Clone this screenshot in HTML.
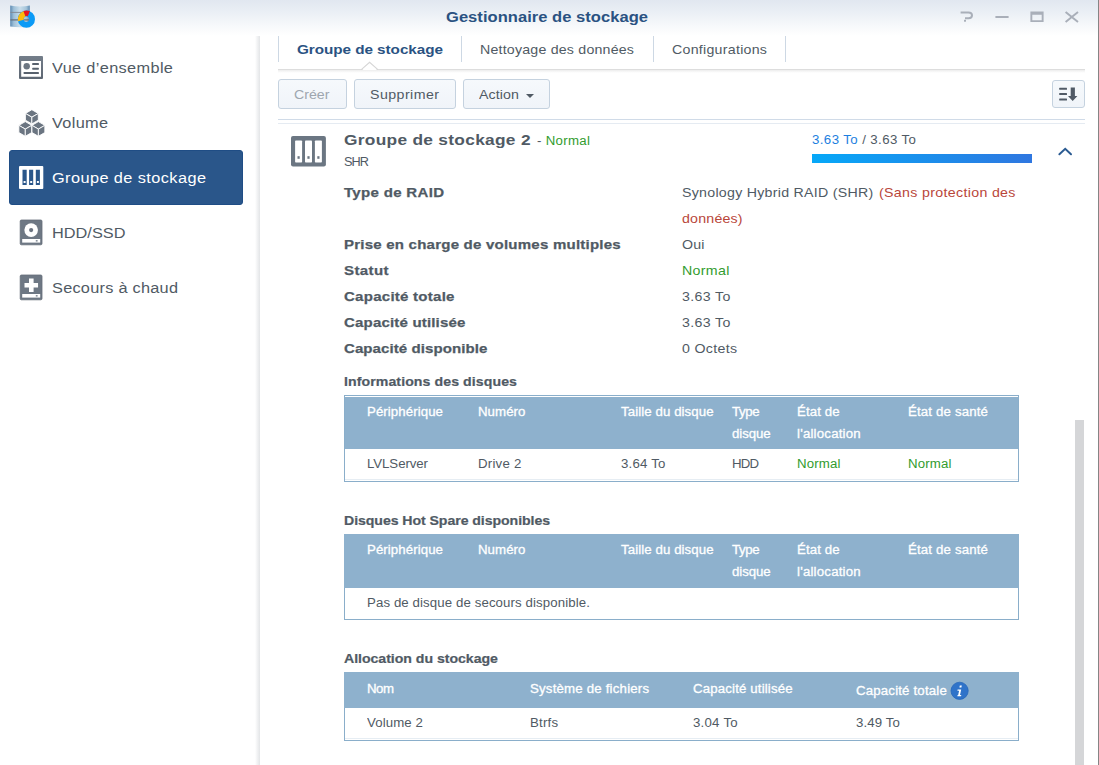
<!DOCTYPE html>
<html lang="fr">
<head>
<meta charset="utf-8">
<title>Gestionnaire de stockage</title>
<style>
*{box-sizing:border-box;margin:0;padding:0}
html,body{width:1099px;height:765px;overflow:hidden;background:#fff}
body{font-family:"Liberation Sans",sans-serif;color:#505a64;position:relative;font-size:13px}
.abs{position:absolute}
.t{position:absolute;white-space:nowrap;line-height:20px;height:20px;margin-top:1px}
#titlebar{left:0;top:0;width:1098px;height:36px;background:linear-gradient(#e1e7f0 0px,#eaeff5 12px,#f7f9fb 26px,#ffffff 36px)}
#rightedge{left:1098px;top:0;width:1px;height:765px;background:#858585}
#title{font-weight:bold;font-size:14.5px;color:#2a5282}
#sideshadow{left:255px;top:36px;width:5px;height:729px;background:linear-gradient(90deg,rgba(255,255,255,0),#f3f4f5 40%,#e3e5e7 100%)}
.nav{font-size:15.4px;color:#505a64}
#sel{left:9px;top:150px;width:234px;height:55px;background:#2a568a;border:1px solid #1f4d85;border-radius:3px}
.tab{font-size:13.4px;color:#505a64}
.tabsep{position:absolute;top:36px;width:1px;height:26px;background:#cdd8e4}
.btn{position:absolute;top:79px;height:30px;border:1px solid #c5d2df;border-radius:3px;background:linear-gradient(#f6f9fc,#f0f4f9)}
.btxt{font-size:13.4px;color:#505a64}
.lbl{-webkit-text-stroke:0.25px #505a64;font-weight:bold;font-size:13.2px;color:#505a64}
.val{font-size:13.4px;color:#505a64}
.sec{-webkit-text-stroke:0.2px #505a64;font-weight:bold;font-size:12.4px;color:#505a64}
.tbl{position:absolute;left:344px;width:675px;border:1px solid #8fb1cc;background:#fff}
.th{position:absolute;left:344px;width:675px;background:#8eb1cd}
.h{font-size:12.5px;color:#fff;-webkit-text-stroke:0.3px #fff}
.c{font-size:12.5px;color:#505a64}
.green{color:#329c2e}
.red{color:#b9463a}
</style>
</head>
<body>
<!-- title bar -->
<div id="titlebar" class="abs"></div>
<div id="rightedge" class="abs"></div>
<div id="title" class="t" style="letter-spacing:0.03px;transform:scaleX(1.14);transform-origin:0 0;left:446px;top:6px">Gestionnaire de stockage</div>

<!-- sidebar -->
<div id="sideshadow" class="abs"></div>
<div id="sel" class="abs"></div>
<div id="n1" class="t nav" style="letter-spacing:0.33px;transform:scaleX(1.06);transform-origin:0 0;left:52px;top:57px">Vue d’ensemble</div>
<div id="n2" class="t nav" style="letter-spacing:0.30px;transform:scaleX(1.06);transform-origin:0 0;left:52px;top:112px">Volume</div>
<div id="n3" class="t nav" style="letter-spacing:0.39px;transform:scaleX(1.06);transform-origin:0 0;left:52px;top:167px;color:#fff">Groupe de stockage</div>
<div id="n4" class="t nav" style="letter-spacing:-0.00px;transform:scaleX(1.06);transform-origin:0 0;left:52px;top:222px">HDD/SSD</div>
<div id="n5" class="t nav" style="letter-spacing:0.24px;transform:scaleX(1.06);transform-origin:0 0;left:52px;top:277px">Secours à chaud</div>

<!-- tabs -->
<div class="tabsep" style="left:278px"></div>
<div class="tabsep" style="left:461px"></div>
<div class="tabsep" style="left:653px"></div>
<div class="tabsep" style="left:785px"></div>
<div id="tb1" class="t tab" style="letter-spacing:-0.04px;transform:scaleX(1.14);transform-origin:0 0;left:297px;top:39px;font-weight:bold;color:#2a5282">Groupe de stockage</div>
<div id="tb2" class="t tab" style="letter-spacing:0.19px;transform:scaleX(1.06);transform-origin:0 0;left:480px;top:39px">Nettoyage des données</div>
<div id="tb3" class="t tab" style="letter-spacing:0.25px;transform:scaleX(1.06);transform-origin:0 0;left:672px;top:39px">Configurations</div>
<div id="tabline" class="abs" style="left:278px;top:69px;width:807px;height:4px;background:linear-gradient(#dddddd 0px,#dddddd 1px,#ededed 1px,#f3f3f3 2px,#fafafa 3px,#ffffff 4px)"></div>

<!-- toolbar -->
<div class="btn" style="left:278px;width:69px"></div>
<div class="btn" style="left:354px;width:102px"></div>
<div class="btn" style="left:463px;width:87px"></div>
<div class="btn" style="left:1052px;width:33px;top:80px;height:28px"></div>
<div id="b1" class="t btxt" style="letter-spacing:-0.02px;transform:scaleX(1.06);transform-origin:0 0;left:294px;top:84px;color:#9ea6af">Créer</div>
<div id="b2" class="t btxt" style="letter-spacing:0.41px;transform:scaleX(1.06);transform-origin:0 0;left:370px;top:84px">Supprimer</div>
<div id="b3" class="t btxt" style="letter-spacing:0.07px;transform:scaleX(1.06);transform-origin:0 0;left:479px;top:84px">Action</div>
<div class="abs" style="left:526px;top:94px;width:0;height:0;border-left:4px solid transparent;border-right:4px solid transparent;border-top:4px solid #505a64"></div>
<div class="abs" style="left:278px;top:119px;width:807px;height:1px;background:#d0dbe8"></div>
<div class="abs" style="left:278px;top:123px;width:807px;height:1px;background:#e5ebf2"></div>

<!-- group header -->
<div id="g1" class="t" style="letter-spacing:0.26px;transform:scaleX(1.14);transform-origin:0 0;left:344px;top:129px;font-weight:bold;font-size:15.2px;color:#505a64">Groupe de stockage 2</div>
<div id="g2" class="t" style="letter-spacing:0.29px;transform:scaleX(1.06);transform-origin:0 0;left:537px;top:130px;font-size:12.5px;color:#505a64">- <span class="green">Normal</span></div>
<div id="g3" class="t" style="letter-spacing:-0.88px;transform:scaleX(1.06);transform-origin:0 0;left:344px;top:151px;font-size:12px">SHR</div>
<div id="u1" class="t" style="letter-spacing:0.38px;transform:scaleX(1.06);transform-origin:0 0;left:812px;top:129px;font-size:12.5px"><span style="color:#1d7fe0">3.63 To</span> / 3.63 To</div>
<div class="abs" style="left:812px;top:154px;width:220px;height:9px;background:linear-gradient(90deg,#06a8f8,#2f77e0)"></div>

<!-- details -->
<div id="l1" class="t lbl" style="letter-spacing:0.27px;transform:scaleX(1.14);transform-origin:0 0;left:344px;top:182px">Type de RAID</div>
<div id="l2" class="t lbl" style="letter-spacing:0.19px;transform:scaleX(1.14);transform-origin:0 0;left:344px;top:234px">Prise en charge de volumes multiples</div>
<div id="l3" class="t lbl" style="letter-spacing:0.35px;transform:scaleX(1.14);transform-origin:0 0;left:344px;top:260px">Statut</div>
<div id="l4" class="t lbl" style="letter-spacing:0.22px;transform:scaleX(1.14);transform-origin:0 0;left:344px;top:286px">Capacité totale</div>
<div id="l5" class="t lbl" style="letter-spacing:0.15px;transform:scaleX(1.14);transform-origin:0 0;left:344px;top:312px">Capacité utilisée</div>
<div id="l6" class="t lbl" style="letter-spacing:0.06px;transform:scaleX(1.14);transform-origin:0 0;left:344px;top:338px">Capacité disponible</div>
<div id="v1" class="t val" style="letter-spacing:0.25px;transform:scaleX(1.06);transform-origin:0 0;left:682px;top:182px">Synology Hybrid RAID (SHR)</div>
<div id="v1b" class="t val red" style="letter-spacing:0.31px;transform:scaleX(1.06);transform-origin:0 0;left:879px;top:182px">(Sans protection des</div>
<div id="v1c" class="t val red" style="letter-spacing:0.19px;transform:scaleX(1.06);transform-origin:0 0;left:682px;top:208px">données)</div>
<div id="v2" class="t val" style="letter-spacing:0.10px;transform:scaleX(1.06);transform-origin:0 0;left:682px;top:234px">Oui</div>
<div id="v3" class="t val green" style="letter-spacing:0.29px;transform:scaleX(1.06);transform-origin:0 0;left:682px;top:260px">Normal</div>
<div id="v4" class="t val" style="letter-spacing:0.34px;transform:scaleX(1.06);transform-origin:0 0;left:682px;top:286px">3.63 To</div>
<div id="v5" class="t val" style="letter-spacing:0.34px;transform:scaleX(1.06);transform-origin:0 0;left:682px;top:312px">3.63 To</div>
<div id="v6" class="t val" style="letter-spacing:0.30px;transform:scaleX(1.06);transform-origin:0 0;left:682px;top:338px">0 Octets</div>


<!-- table 1 -->
<div id="s1" class="t sec" style="letter-spacing:0.07px;transform:scaleX(1.14);transform-origin:0 0;left:344px;top:371px">Informations des disques</div>
<div class="abs" style="left:344px;top:395px;width:675px;height:87px;border:1px solid #8aaeca;background:#fff"></div>
<div class="abs" style="left:345px;top:397px;width:673px;height:52px;background:#8eb1cd"></div>
<div class="abs" style="left:345px;top:479px;width:673px;height:1px;background:#e6edf3"></div>
<div id="h11" class="t h" style="letter-spacing:0.07px;transform:scaleX(1.06);transform-origin:0 0;left:367px;top:401px">Périphérique</div>
<div id="h12" class="t h" style="letter-spacing:0.05px;transform:scaleX(1.06);transform-origin:0 0;left:478px;top:401px">Numéro</div>
<div id="h13" class="t h" style="letter-spacing:0.08px;transform:scaleX(1.06);transform-origin:0 0;left:621px;top:401px">Taille du disque</div>
<div id="h14" class="t h" style="letter-spacing:-0.33px;transform:scaleX(1.06);transform-origin:0 0;left:732px;top:401px">Type</div>
<div id="h14b" class="t h" style="letter-spacing:-0.07px;transform:scaleX(1.06);transform-origin:0 0;left:732px;top:423px">disque</div>
<div id="h15" class="t h" style="letter-spacing:0.11px;transform:scaleX(1.06);transform-origin:0 0;left:797px;top:401px">État de</div>
<div id="h15b" class="t h" style="letter-spacing:0.19px;transform:scaleX(1.06);transform-origin:0 0;left:797px;top:423px">l'allocation</div>
<div id="h16" class="t h" style="letter-spacing:0.15px;transform:scaleX(1.06);transform-origin:0 0;left:908px;top:401px">État de santé</div>
<div id="c11" class="t c" style="letter-spacing:-0.07px;transform:scaleX(1.06);transform-origin:0 0;left:367px;top:453px">LVLServer</div>
<div id="c12" class="t c" style="letter-spacing:0.22px;transform:scaleX(1.06);transform-origin:0 0;left:478px;top:453px">Drive 2</div>
<div id="c13" class="t c" style="letter-spacing:0.17px;transform:scaleX(1.06);transform-origin:0 0;left:621px;top:453px">3.64 To</div>
<div id="c14" class="t c" style="letter-spacing:-0.81px;transform:scaleX(1.06);transform-origin:0 0;left:732px;top:453px">HDD</div>
<div id="c15" class="t c green" style="letter-spacing:0.13px;transform:scaleX(1.06);transform-origin:0 0;left:797px;top:453px">Normal</div>
<div id="c16" class="t c green" style="letter-spacing:0.13px;transform:scaleX(1.06);transform-origin:0 0;left:908px;top:453px">Normal</div>

<!-- table 2 -->
<div id="s2" class="t sec" style="letter-spacing:-0.06px;transform:scaleX(1.14);transform-origin:0 0;left:344px;top:510px">Disques Hot Spare disponibles</div>
<div class="abs" style="left:344px;top:534px;width:675px;height:86px;border:1px solid #8aaeca;background:#fff"></div>
<div class="abs" style="left:344px;top:534px;width:675px;height:54px;background:#8eb1cd"></div>
<div id="h21" class="t h" style="letter-spacing:0.07px;transform:scaleX(1.06);transform-origin:0 0;left:367px;top:539px">Périphérique</div>
<div id="h22" class="t h" style="letter-spacing:0.05px;transform:scaleX(1.06);transform-origin:0 0;left:478px;top:539px">Numéro</div>
<div id="h23" class="t h" style="letter-spacing:0.08px;transform:scaleX(1.06);transform-origin:0 0;left:621px;top:539px">Taille du disque</div>
<div id="h24" class="t h" style="letter-spacing:-0.33px;transform:scaleX(1.06);transform-origin:0 0;left:732px;top:539px">Type</div>
<div id="h24b" class="t h" style="letter-spacing:-0.07px;transform:scaleX(1.06);transform-origin:0 0;left:732px;top:561px">disque</div>
<div id="h25" class="t h" style="letter-spacing:0.11px;transform:scaleX(1.06);transform-origin:0 0;left:797px;top:539px">État de</div>
<div id="h25b" class="t h" style="letter-spacing:0.19px;transform:scaleX(1.06);transform-origin:0 0;left:797px;top:561px">l'allocation</div>
<div id="h26" class="t h" style="letter-spacing:0.15px;transform:scaleX(1.06);transform-origin:0 0;left:908px;top:539px">État de santé</div>
<div id="c21" class="t c" style="letter-spacing:0.09px;transform:scaleX(1.06);transform-origin:0 0;left:367px;top:592px">Pas de disque de secours disponible.</div>

<!-- table 3 -->
<div id="s3" class="t sec" style="letter-spacing:-0.03px;transform:scaleX(1.14);transform-origin:0 0;left:344px;top:648px">Allocation du stockage</div>
<div class="abs" style="left:344px;top:672px;width:675px;height:69px;border:1px solid #8aaeca;background:#fff"></div>
<div class="abs" style="left:344px;top:672px;width:675px;height:36px;background:#8eb1cd"></div>
<div class="abs" style="left:345px;top:738px;width:673px;height:1px;background:#e6edf3"></div>
<div id="h31" class="t h" style="letter-spacing:-0.47px;transform:scaleX(1.06);transform-origin:0 0;left:367px;top:678px">Nom</div>
<div id="h32" class="t h" style="letter-spacing:0.18px;transform:scaleX(1.06);transform-origin:0 0;left:530px;top:678px">Système de fichiers</div>
<div id="h33" class="t h" style="letter-spacing:0.14px;transform:scaleX(1.06);transform-origin:0 0;left:693px;top:678px">Capacité utilisée</div>
<div id="h34" class="t h" style="letter-spacing:0.16px;transform:scaleX(1.06);transform-origin:0 0;left:856px;top:680px">Capacité totale</div>
<div id="c31" class="t c" style="letter-spacing:0.10px;transform:scaleX(1.06);transform-origin:0 0;left:367px;top:712px">Volume 2</div>
<div id="c32" class="t c" style="letter-spacing:0.18px;transform:scaleX(1.06);transform-origin:0 0;left:530px;top:712px">Btrfs</div>
<div id="c33" class="t c" style="letter-spacing:0.22px;transform:scaleX(1.06);transform-origin:0 0;left:693px;top:712px">3.04 To</div>
<div id="c34" class="t c" style="letter-spacing:0.12px;transform:scaleX(1.06);transform-origin:0 0;left:856px;top:712px">3.49 To</div>


<!-- icons -->
<svg class="abs" style="left:0;top:0" width="1099" height="765" viewBox="0 0 1099 765">
<defs>
<linearGradient id="cyl" x1="0" x2="1" y1="0" y2="0"><stop offset="0" stop-color="#5c8ab2"/><stop offset="0.18" stop-color="#9dbfd8"/><stop offset="0.5" stop-color="#c9deeb"/><stop offset="0.82" stop-color="#a5c4da"/><stop offset="1" stop-color="#5c8ab2"/></linearGradient>
<linearGradient id="fr" x1="0" x2="0" y1="0" y2="1"><stop offset="0" stop-color="#747e8a"/><stop offset="1" stop-color="#5d6672"/></linearGradient>
</defs>
<!-- app icon -->
<g>
<path d="M10.2,5.6 Q20,7.6 29.8,5.6 L29.8,26.4 Q20,28 10.2,26.4Z" fill="url(#cyl)"/>
<rect x="10.4" y="11.9" width="19.2" height="0.9" fill="#7f8791"/>
<rect x="10.4" y="19.3" width="19.2" height="1.2" fill="#666e78"/>
<circle cx="26.4" cy="19.2" r="5.65" fill="none" stroke="#0b9af6" stroke-width="5.9"/>
<path d="M18.06,21.28 A8.6,8.6 0 0 1 24.03,10.93 L25.66,16.60 A2.7,2.7 0 0 0 23.78,19.85Z" fill="#fdba0a"/>
<path d="M23.46,11.12 A8.6,8.6 0 0 1 29.90,11.34 L27.74,16.19 A3.3,3.3 0 0 0 25.27,16.10Z" fill="#e8161f"/>
</g>
<!-- window controls -->
<g fill="none" stroke="#a9afb9" stroke-width="2">
<path d="M960.6,12.4 H968.5 Q972,12.4 972,15.3 Q972,18.2 968.5,18.2 H965"/>
<path d="M995.4,17 H1008.6" stroke-width="2"/>
<path d="M1065.6,11.9 L1078,22.1 M1078,11.9 L1065.6,22.1" stroke-width="1.9"/>
</g>
<rect x="964" y="19.8" width="2" height="1.9" fill="#a9afb9"/>
<path d="M1030.4,11.5 H1043.6 V22.1 H1030.4Z M1032.3,14.8 V20.3 H1041.7 V14.8Z" fill="#a9afb9" fill-rule="evenodd"/>
<!-- nav: vue d'ensemble -->
<path d="M20,56 H42 Q43,56 43,57 V78 Q43,79 42,79 H20 Q19,79 19,78 V57 Q19,56 20,56Z M21.2,61 V76.7 H41 V61Z" fill="url(#fr)" fill-rule="evenodd"/>
<circle cx="26.7" cy="66.3" r="3.2" fill="#6c7682"/>
<rect x="32.2" y="63" width="6.7" height="2" rx="0.6" fill="#58616d"/>
<rect x="32.2" y="67.7" width="6.7" height="2" rx="0.6" fill="#58616d"/>
<rect x="23.6" y="72" width="15.3" height="2" rx="0.6" fill="#58616d"/>
<!-- nav: volume -->
<g fill="#6b7581" stroke="#fff" stroke-width="0.9" stroke-linejoin="round">
<path d="M31.85,109.7 L38.300000000000004,113.45 L31.85,117.2 L25.400000000000002,113.45Z"/><path d="M25.400000000000002,113.45 L31.85,117.2 L31.85,123.90 L25.400000000000002,120.15Z"/><path d="M38.300000000000004,113.45 L31.85,117.2 L31.85,123.90 L38.300000000000004,120.15Z"/>
<path d="M25.3,121.6 L31.75,125.35 L25.3,129.1 L18.85,125.35Z"/><path d="M18.85,125.35 L25.3,129.1 L25.3,136.30 L18.85,132.55Z"/><path d="M31.75,125.35 L25.3,129.1 L25.3,136.30 L31.75,132.55Z"/>
<path d="M38.4,121.6 L44.85,125.35 L38.4,129.1 L31.95,125.35Z"/><path d="M31.95,125.35 L38.4,129.1 L38.4,136.30 L31.95,132.55Z"/><path d="M44.85,125.35 L38.4,129.1 L38.4,136.30 L44.85,132.55Z"/>
</g>
<!-- nav: groupe (selected) -->
<path d="M20,166 H42.3 Q43.3,166 43.3,167 V188 Q43.3,189 42.3,189 H20 Q19,189 19,188 V167 Q19,166 20,166Z M22.5,169.8 V185.1 H26.7 V169.8Z M29.1,169.8 V185.1 H33.2 V169.8Z M35.8,169.8 V185.1 H39.9 V169.8Z" fill="#fff" fill-rule="evenodd"/>
<rect x="23.6" y="181" width="2" height="2" fill="#fff"/><rect x="30.2" y="181" width="2" height="2" fill="#fff"/><rect x="36.9" y="181" width="2" height="2" fill="#fff"/>
<!-- nav: hdd -->
<rect x="20.2" y="220" width="21.8" height="24.8" rx="1.2" fill="#6e7884" stroke="#646d79" stroke-width="0.8"/>
<circle cx="31.15" cy="230.1" r="6.8" fill="#fff"/><circle cx="31.15" cy="230.1" r="2.1" fill="#6b7480"/>
<rect x="22.2" y="239" width="18" height="3.6" fill="#fff"/><rect x="35.8" y="240" width="1.8" height="1.6" fill="#8a929c"/>
<!-- nav: secours -->
<rect x="20.2" y="275" width="21.8" height="24.8" rx="1.2" fill="#6e7884" stroke="#646d79" stroke-width="0.8"/>
<path d="M29,278.6 H33.6 V283 H38.05 V287.4 H33.6 V292 H29 V287.4 H24.5 V283 H29Z" fill="#fff"/>
<rect x="22.2" y="294" width="18" height="3.6" fill="#fff"/><rect x="35.8" y="295" width="1.8" height="1.6" fill="#8a929c"/>
<!-- tab notch -->
<path d="M362.2,70 L369.6,63 L377,70Z" fill="#fff"/>
<path d="M361.3,69.6 L369.6,62.3 L377.9,69.6" fill="none" stroke="#d6d6d6" stroke-width="1.1"/>
<!-- toolbar sort icon -->
<g fill="#505a66">
<rect x="1059.2" y="87.7" width="7.8" height="2" rx="0.5"/><rect x="1059.2" y="93.1" width="7.8" height="2" rx="0.5"/><rect x="1059.2" y="98.5" width="7.8" height="2" rx="0.5"/>
<path d="M1070.7,87.5 H1074.9 V96 H1077.4 L1072.7,100.9 L1068,96 H1070.7Z"/>
</g>
<!-- big group icon -->
<rect x="291" y="136.1" width="34.9" height="30.5" rx="2" fill="#6b7682"/>
<g fill="#fff"><rect x="295.1" y="140.5" width="7" height="22" rx="0.8"/><rect x="305" y="140.5" width="7" height="22" rx="0.8"/><rect x="314.9" y="140.5" width="7" height="22" rx="0.8"/></g>
<g fill="#6b7682"><rect x="297.5" y="156.2" width="2.2" height="2.6"/><rect x="307.4" y="156.2" width="2.2" height="2.6"/><rect x="317.3" y="156.2" width="2.2" height="2.6"/></g>
<!-- chevron -->
<path d="M1059.4,154.2 L1065.2,148.8 L1071,154.2" fill="none" stroke="#2b5b92" stroke-width="2" stroke-linecap="round" stroke-linejoin="miter"/>
<!-- info -->
<circle cx="959.6" cy="690.8" r="8.6" fill="#2f73c9" stroke="#2767ba" stroke-width="0.8"/>
<path d="M959.8,685.6 h2 l-0.4,2 h-2Z M957.6,689.6 h3.6 l-1.2,5.4 h1.3 l-0.25,1.2 h-3.7 l0.25,-1.2 h0.6 l0.9,-4.2 h-1.7Z" fill="#fff"/>
</svg>

<!-- scrollbar -->
<div class="abs" style="left:1075px;top:420px;width:9px;height:345px;background:#d5d6d8"></div>
</body>
</html>
